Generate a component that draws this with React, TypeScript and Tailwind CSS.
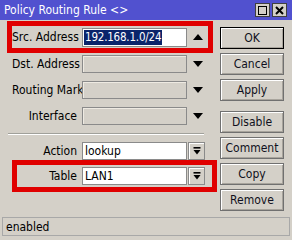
import type { ReactNode } from 'react'

const font = { fontFamily: '"DejaVu Sans Condensed", "DejaVu Sans", "Liberation Sans", sans-serif' }

function TriUp() {
  return (
    <svg width="10" height="6" viewBox="0 0 10 6">
      <polygon points="0,6 10,6 5,0" fill="#000" />
    </svg>
  )
}

function TriDown() {
  return (
    <svg width="10" height="6" viewBox="0 0 10 6">
      <polygon points="0,0 10,0 5,6" fill="#000" />
    </svg>
  )
}

function DropBtn() {
  return (
    <div className="ml-[1px] flex h-[18px] w-[17px] items-center justify-center border border-[#8a8a8a] bg-[#d4d0c8] shadow-[inset_1px_1px_0_#fff]">
      <svg width="8" height="8" viewBox="0 0 8 8">
        <rect x="0.5" y="0" width="7" height="1.6" fill="#000" />
        <polygon points="0.5,3 7.5,3 4,7.5" fill="#000" />
      </svg>
    </div>
  )
}

function Row({
  label,
  children,
  arrow,
  white,
}: {
  label: string
  children?: ReactNode
  arrow?: ReactNode
  white?: boolean
}) {
  return (
    <div className="flex h-[18px] items-center">
      <div className="w-[65px] text-right text-[12px] leading-none text-black whitespace-nowrap">{label}</div>
      <div
        className={
          white
            ? 'ml-[5px] flex h-[18px] w-[105px] items-center border border-[#8a8a8a] bg-white px-[2px] text-[12px] text-black'
            : 'ml-[5px] h-[18px] w-[105px] border border-[#8a8a8a] bg-[#d4d0c8] shadow-[inset_1px_1px_0_#eeeae2]'
        }
      >
        {children}
      </div>
      {arrow}
    </div>
  )
}

function Btn({ children, primary, className = '' }: { children: ReactNode; primary?: boolean; className?: string }) {
  return (
    <div
      className={
        'flex h-[22px] w-[64px] items-center justify-center text-[12px] text-[#101020] shadow-[inset_1px_1px_0_#fff,inset_-1px_-1px_0_#a8a49c] ' +
        (primary ? 'border border-black ' : 'border border-[#707070] ') +
        className
      }
    >
      {children}
    </div>
  )
}

export default function App() {
  return (
    <div className="h-[240px] w-[292px] overflow-hidden bg-[#d4d0c8]" style={font}>
      {/* title bar */}
      <div className="flex h-[20px] items-center justify-between bg-[#5151cf] pl-[4px] pr-[5px]">
        <span className="text-[12px] leading-none text-white">Policy Routing Rule &lt;&gt;</span>
        <div className="flex gap-[2px]">
          <div className="flex h-[14px] w-[15px] items-center justify-center border border-[#404040] bg-[#d4d0c8]">
            <div className="h-[9px] w-[9px] border-[1.5px] border-black" />
          </div>
          <div className="flex h-[14px] w-[15px] items-center justify-center border border-[#404040] bg-[#d4d0c8]">
            <svg width="9" height="9" viewBox="0 0 9 9">
              <path d="M1 1 L8 8 M8 1 L1 8" stroke="#000" strokeWidth="2" />
            </svg>
          </div>
        </div>
      </div>

      <div className="flex">
        {/* form */}
        <div className="w-[218px]">
          <div className="ml-[7px] mt-[1px] flex h-[32px] w-[206px] items-center border-[5px] border-[#e00000]">
            <div className="flex h-[19px] items-center">
              <div className="w-[65px] text-right text-[12px] leading-none text-black whitespace-nowrap">Src. Address</div>
              <div className="ml-[5px] flex h-[19px] w-[105px] items-center border border-[#8a8a8a] bg-white px-[1px]">
                <span className="bg-[#0a246a] px-[1px] text-[11.5px] leading-[15px] tracking-[-0.2px] text-white">192.168.1.0/24</span>
              </div>
              <div className="ml-[6px] flex w-[10px] justify-center">
                <TriUp />
              </div>
            </div>
          </div>

          <div className="ml-[12px] mt-[2px] flex flex-col gap-[8px]">
            <Row label="Dst. Address" arrow={<div className="ml-[6px]"><TriDown /></div>} />
            <Row label="Routing Mark" arrow={<div className="ml-[6px]"><TriDown /></div>} />
            <Row label="Interface" arrow={<div className="ml-[6px]"><TriDown /></div>} />
          </div>

          <div className="ml-[8px] mt-[8px] h-[2px] w-[196px] border-t border-[#a0a09a] border-b border-b-white" />

          <div className="ml-[12px] mt-[7px]">
            <Row label="Action" white arrow={<DropBtn />}>
              lookup
            </Row>
          </div>

          <div className="ml-[12px] flex h-[32px] w-[205px] items-center border-[5px] border-[#e00000]">
            <div className="-ml-[5px]">
              <Row label="Table" white arrow={<DropBtn />}>
                LAN1
              </Row>
            </div>
          </div>
        </div>

        {/* buttons */}
        <div className="ml-[2px] mt-[7px] flex flex-col gap-[4px]">
          <Btn primary>OK</Btn>
          <Btn>Cancel</Btn>
          <Btn>Apply</Btn>
          <Btn className="mt-[6px]">Disable</Btn>
          <Btn>Comment</Btn>
          <Btn>Copy</Btn>
          <Btn>Remove</Btn>
        </div>
      </div>

      {/* status bar */}
      <div className="mx-[2px] mt-[6px] flex h-[19px] items-center border border-[#a8a8a8] pl-[3px] text-[12px] text-black">
        enabled
      </div>
    </div>
  )
}
